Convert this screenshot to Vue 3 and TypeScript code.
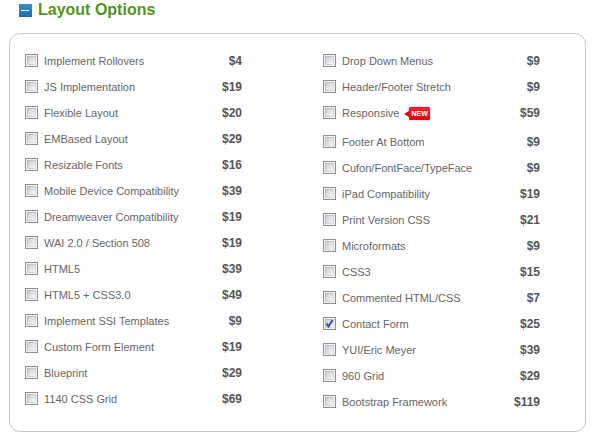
<script setup lang="ts">
import { reactive, ref } from 'vue'

interface Option {
  id: string
  label: string
  price: number
  checked: boolean
  isNew: boolean
}

function option(id: string, label: string, price: number, checked = false, isNew = false): Option {
  return { id, label, price, checked, isNew }
}

const open = ref(true)

const columns = reactive<Option[][]>([
  [
    option('rollovers', 'Implement Rollovers', 4),
    option('js', 'JS Implementation', 19),
    option('flexible', 'Flexible Layout', 20),
    option('em', 'EMBased Layout', 29),
    option('fonts', 'Resizable Fonts', 16),
    option('mobile', 'Mobile Device Compatibility', 39),
    option('dreamweaver', 'Dreamweaver Compatibility', 19),
    option('wai', 'WAI 2.0 / Section 508', 19),
    option('html5', 'HTML5', 39),
    option('html5-css3', 'HTML5 + CSS3.0', 49),
    option('ssi', 'Implement SSI Templates', 9),
    option('form-element', 'Custom Form Element', 19),
    option('blueprint', 'Blueprint', 29),
    option('grid-1140', '1140 CSS Grid', 69),
  ],
  [
    option('menus', 'Drop Down Menus', 9),
    option('stretch', 'Header/Footer Stretch', 9),
    option('responsive', 'Responsive', 59, false, true),
    option('footer', 'Footer At Bottom', 9),
    option('cufon', 'Cufon/FontFace/TypeFace', 9),
    option('ipad', 'iPad Compatibility', 19),
    option('print', 'Print Version CSS', 21),
    option('microformats', 'Microformats', 9),
    option('css3', 'CSS3', 15),
    option('commented', 'Commented HTML/CSS', 7),
    option('contact', 'Contact Form', 25, true),
    option('yui', 'YUI/Eric Meyer', 39),
    option('grid-960', '960 Grid', 29),
    option('bootstrap', 'Bootstrap Framework', 119),
  ],
])
</script>

<template>
  <section class="options">
    <h2 class="heading">
      <button class="toggle" type="button" :aria-expanded="open" @click="open = !open">
        <svg class="toggle-icon" viewBox="0 0 13 13" aria-hidden="true">
          <defs>
            <linearGradient id="toggle-fill" x1="0" y1="0" x2="0" y2="1">
              <stop offset="0" stop-color="#3d8ccb" />
              <stop offset="1" stop-color="#1f6db0" />
            </linearGradient>
          </defs>
          <rect width="13" height="13" fill="url(#toggle-fill)" />
          <rect x="2" y="6" width="8" height="1" fill="#fff" />
          <rect v-if="!open" x="6" y="2" width="1" height="9" fill="#fff" />
        </svg>
        <span>Layout Options</span>
      </button>
    </h2>
    <div v-if="open" class="panel">
      <ul v-for="(column, index) in columns" :key="index" class="column">
        <li v-for="item in column" :key="item.id" class="row" :class="{ 'row-new': item.isNew }">
          <input :id="item.id" v-model="item.checked" class="box" type="checkbox" />
          <label class="label" :for="item.id">{{ item.label }}</label>
          <span v-if="item.isNew" class="badge">NEW</span>
          <span class="price">${{ item.price }}</span>
        </li>
      </ul>
    </div>
  </section>
</template>

<style>
body {
  background: #fff;
}
</style>

<style scoped>
.options {
  padding: 0 10px 0 9px;
  font-family: "Liberation Sans", Arial, sans-serif;
}

.heading {
  margin: 0;
  padding: 0 0 13px 10px;
  font-size: 16px;
  line-height: 20px;
}

.toggle {
  display: flex;
  align-items: center;
  gap: 6px;
  padding: 0;
  border: 0;
  background: none;
  color: #559419;
  font: inherit;
  cursor: pointer;
}

.toggle-icon {
  width: 13px;
  height: 13px;
}

.panel {
  display: grid;
  grid-template-columns: 1fr 1fr;
  column-gap: 81px;
  padding: 14px 45px 16px 15px;
  border: 1px solid #c8c8c8;
  border-radius: 11px;
}

.column {
  margin: 0;
  padding: 0;
  list-style: none;
}

.row {
  display: flex;
  align-items: center;
  height: 26px;
}

.row-new {
  padding-bottom: 3px;
}

.box {
  --fill:
    linear-gradient(135deg, #cbcfd6, #f6f6f6) center / 7px 7px no-repeat,
    linear-gradient(135deg, #aeb3b9, #e2e4e7) center / 9px 9px no-repeat;
  appearance: none;
  flex: none;
  width: 13px;
  height: 13px;
  margin: 0 6px 1px 0;
  border: 1px solid #8e8f8f;
  background: var(--fill), #f4f4f4;
}

.box:checked {
  background:
    url("data:image/svg+xml,%3Csvg xmlns='http://www.w3.org/2000/svg' viewBox='0 0 11 11'%3E%3Cpath d='M2.5 5.5 L4.5 8.5 L8.5 2' fill='none' stroke='%23354f94' stroke-width='2'/%3E%3C/svg%3E") center / 11px 11px no-repeat,
    var(--fill), #f4f4f4;
}

.label {
  color: #666;
  font-size: 11px;
  line-height: 14px;
  white-space: nowrap;
}

.badge {
  position: relative;
  flex: none;
  margin-left: 10px;
  padding: 0 2px;
  border-radius: 1px;
  background: linear-gradient(#f5222c, #e3000f);
  box-shadow: 0 0 2px #f3a0a4;
  color: #fff;
  font-size: 7px;
  font-weight: bold;
  line-height: 13px;
}

.badge::before {
  content: "";
  position: absolute;
  top: 4px;
  right: 100%;
  border: solid transparent;
  border-width: 3px 5px 3px 0;
  border-right-color: #e3000f;
}

.price {
  margin-left: auto;
  color: #555;
  font-size: 12px;
  font-weight: bold;
  line-height: 14px;
}
</style>
